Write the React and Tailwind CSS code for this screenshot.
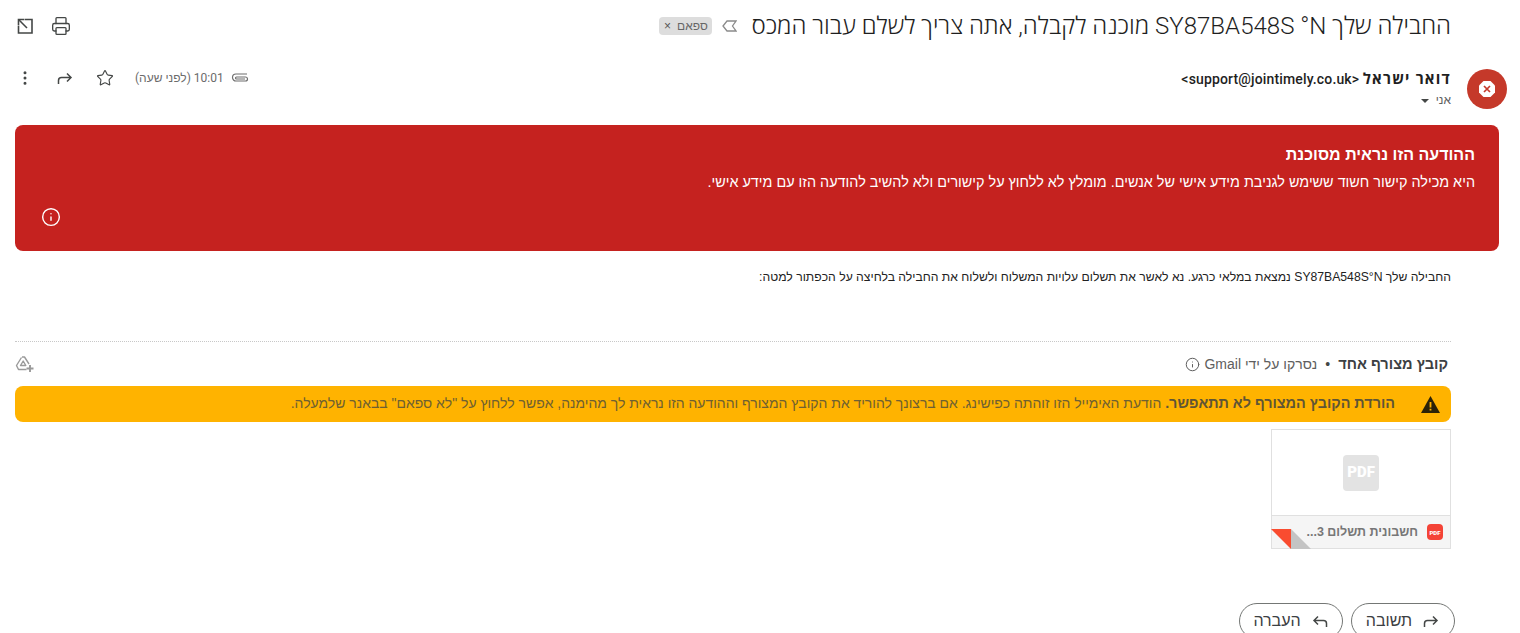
import React from 'react';
import { Star, EllipsisVertical, Printer, Info } from 'lucide-react';

const hebrew = "font-['Liberation_Sans',sans-serif]";

const PopOut = () => (
  <svg width="20" height="20" viewBox="0 0 20 20" fill="none" stroke="#444746" strokeWidth="1.6">
    <path d="M9.5 3.5h7.5v13.5H3.5V9.5" />
    <path d="M3.5 9V3.5H9" />
    <path d="M3.8 3.8l8.2 8.2" />
  </svg>
);

const ForwardArrow = () => (
  <svg width="18" height="18" viewBox="0 0 18 18" fill="none" stroke="#444746" strokeWidth="1.5">
    <path d="M2.5 15v-3.5q0-3 3-3h9.5M11 4.5l4 4-4 4" />
  </svg>
);

const ReplyArrow = () => (
  <svg width="18" height="18" viewBox="0 0 18 18" fill="none" stroke="#444746" strokeWidth="1.5">
    <path d="M15.5 15v-3.5q0-3-3-3H3M7 4.5l-4 4 4 4" />
  </svg>
);

const Clip = () => (
  <svg width="18" height="18" viewBox="0 0 18 18" fill="none" stroke="#6f6f6f" strokeWidth="1.2">
    <path d="M16 5H5a3.5 3.5 0 0 0 0 7h9.5a2 2 0 0 0 0-4H5.5a.9.9 0 0 0 0 2H14" />
  </svg>
);

const DriveAdd = () => (
  <svg width="19" height="18" viewBox="0 0 19 18" fill="none" stroke="#9a9a9a" strokeWidth="1.4">
    <path d="M7 2h2.5l4.500 7M6.500 2.500 1.500 10.500l2 4h8" strokeLinejoin="round" />
    <path d="M5.500 10.500 8.200 6l2.600 4.500z" strokeLinejoin="round" />
    <path d="M15 10v7M11.500 13.500h7" strokeWidth="1.900" />
  </svg>
);

const SpamOctagon = () => (
  <div className="flex h-10 w-10 shrink-0 items-center justify-center rounded-full bg-[#c5392a]">
    <svg width="18" height="18" viewBox="0 0 18 18">
      <path d="M5.500 1h7L17 5.500v7L12.500 17h-7L1 12.500v-7z" fill="#fff" />
      <path d="M6 6l6 6M12 6l-6 6" stroke="#c5392a" strokeWidth="1.700" />
    </svg>
  </div>
);

const AttachmentCard = () => (
  <div className="relative h-[120px] w-[180px] border border-[#e0e0e0] bg-white">
    <div className="flex h-[85px] items-center justify-center">
      <div dir="ltr" className="flex h-9 w-9 items-center justify-center rounded bg-[#e3e3e3] font-['Roboto',sans-serif] text-[15px] font-black text-white">PDF</div>
    </div>
    <div className="flex h-[33px] items-center gap-[9px] border-t border-[#e0e0e0] bg-[#f5f5f5] pr-[7px]">
      <div dir="ltr" className="flex h-4 w-4 items-center justify-center rounded-sm bg-[#f44336] text-[6px] font-black text-white">PDF</div>
      <span className={`${hebrew} text-[12.5px] font-bold text-[#777777]`}>חשבונית תשלום 3...</span>
    </div>
    {/* folded corner */}
    <svg className="absolute -bottom-px -left-px" width="40" height="20" viewBox="0 0 40 20">
      <path d="M0 0h20v20z" fill="#f94c30" />
      <path d="M20 0l20 20H20z" fill="#c4c4c4" />
    </svg>
  </div>
);

const PillButton = ({ icon, label }) => (
  <button className="flex h-9 w-[104px] shrink-0 items-center justify-center gap-[10px] rounded-full border border-[#747775] text-base text-[#3c4043]">
    {icon}
    <span className={hebrew}>{label}</span>
  </button>
);

export default function App() {
  return (
    <div dir="rtl" className="flex h-[633px] w-full flex-col overflow-hidden bg-white pl-[15px] pr-[21px] font-['Roboto','Liberation_Sans',sans-serif]">
      {/* subject */}
      <div className="mr-12 flex h-[52px] shrink-0 items-center justify-between">
        <div className="flex items-center">
          <h1 className="font-['Roboto','Open_Sans',sans-serif] text-[24.06px] font-light leading-7 text-[#1f1f1f]">
            {'החבילה שלך N\u200F°\u200F SY87BA548S מוכנה לקבלה, אתה צריך לשלם עבור המכס'}
          </h1>
          <svg className="mr-[14px]" width="15" height="14" viewBox="0 0 15 14" fill="none" stroke="#8a8a8a" strokeWidth="1.300">
            <path d="M14 2H5L1 7l4 5h9l-3.500-5z" />
          </svg>
          <span className={`${hebrew} mr-[10px] flex h-[18px] w-[53px] items-center justify-center gap-1.5 rounded bg-[#dddddd] text-xs text-[#666666]`}>
            ספאם <span className="text-xs text-[#555555]">×</span>
          </span>
        </div>
        <div className="flex items-center gap-4">
          <Printer size={20} color="#444746" strokeWidth={1.600} />
          <PopOut />
        </div>
      </div>

      {/* sender */}
      <div className="-mr-2 flex h-[73px] shrink-0 items-start justify-between">
        <div className="flex items-start gap-4 pt-[17px]">
          <SpamOctagon />
          <div className="-mt-px">
            <div className="text-sm leading-5 text-[#1f1f1f]">
              <span className="font-['Open_Sans',sans-serif] text-[15px] font-bold tracking-[1.2px]">דואר ישראל</span>{' '}
              <span dir="ltr" className="font-medium tracking-[0.15px]">&lt;support@jointimely.co.uk&gt;</span>
            </div>
            <div className={`${hebrew} mt-0.5 flex items-center gap-[7px] text-xs leading-[18px] text-[#5e5e5e]`}>
              אני
              <span className="mt-px h-0 w-0 border-x-4 border-t-4 border-x-transparent border-t-[#444746]" />
            </div>
          </div>
        </div>
        <div className="flex items-center pl-px pt-[17px] text-[#444746]">
          <Clip />
          <span className="mr-[7px] text-xs text-[#6b6b6b]">10:01 (לפני שעה)</span>
          <Star size={18} strokeWidth={1.500} className="mr-[21px]" />
          <span className="mr-[22px]"><ForwardArrow /></span>
          <EllipsisVertical size={18} strokeWidth={2} className="mr-[22px]" />
        </div>
      </div>

      {/* phishing warning */}
      <div className="flex h-[126px] shrink-0 flex-col rounded-lg bg-[#c5221f] pl-[26px] pr-6 pt-[19px] text-white">
        <div className={`${hebrew} text-base font-bold leading-[22px]`}>ההודעה הזו נראית מסוכנת</div>
        <div className={`${hebrew} mt-1.5 text-[14.4px] leading-5`}>
          היא מכילה קישור חשוד ששימש לגניבת מידע אישי של אנשים. מומלץ לא ללחוץ על קישורים ולא להשיב להודעה הזו עם מידע אישי.
        </div>
        <div className="mt-[15px] flex justify-end">
          <Info size={20} strokeWidth={1.700} />
        </div>
      </div>

      {/* body */}
      <p className={`${hebrew} mr-12 mt-[18px] h-[72px] shrink-0 text-[12.2px] leading-[17px] text-[#222222]`}>
        החבילה שלך SY87BA548S°N נמצאת במלאי כרגע. נא לאשר את תשלום עלויות המשלוח ולשלוח את החבילה בלחיצה על הכפתור למטה:
      </p>

      <div className="mr-12 shrink-0 border-t border-dotted border-[#c8c8c8]" />

      {/* attachments */}
      <div className="mr-12 flex h-[44px] shrink-0 items-center justify-between">
        <div className={`${hebrew} flex items-center gap-2 pr-[3px] text-sm`}>
          <span className="text-[14.6px] font-bold text-[#3c4043]">קובץ מצורף אחד</span>
          <span className="text-[#444746]">•</span>
          <span className="text-[#5e5e5e]">נסרקו על ידי Gmail</span>
          <Info size={15} color="#5e5e5e" strokeWidth={1.600} className="-mr-1" />
        </div>
        <DriveAdd />
      </div>

      <div className={`${hebrew} mr-12 flex h-9 shrink-0 items-center rounded-lg bg-[#ffb300] pr-[11px] text-[13.96px] text-[#6e6032]`}>
        <svg className="ml-[26px] shrink-0" width="19" height="17" viewBox="0 0 19 17">
          <path d="M9.500 0 19 17H0z" fill="#2b2208" />
          <path d="M8.600 6h1.800v5.500H8.600zM8.600 12.800h1.800v1.800H8.600z" fill="#ffb300" />
        </svg>
        <span>
          <b className="text-[14.4px] text-[#5f5535]">הורדת הקובץ המצורף לא תתאפשר.</b>{' '}
          הודעת האימייל הזו זוהתה כפישינג. אם ברצונך להוריד את הקובץ המצורף וההודעה הזו נראית לך מהימנה, אפשר ללחוץ על "לא ספאם" בבאנר שלמעלה.
        </span>
      </div>

      <div className="mr-12 mt-[7px] shrink-0"><AttachmentCard /></div>

      <div className="mr-11 mt-[54px] flex shrink-0 gap-2">
        <PillButton label="תשובה" icon={<ForwardArrow />} />
        <PillButton label="העברה" icon={<ReplyArrow />} />
      </div>
    </div>
  );
}
